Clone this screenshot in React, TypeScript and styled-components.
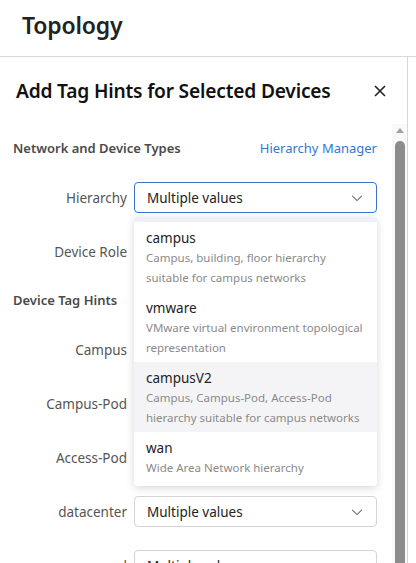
import React from "react";
import styled, { createGlobalStyle } from "styled-components";

const GlobalStyle = createGlobalStyle`
  html, body {
    margin: 0;
    padding: 0;
    background: #fff;
  }
  body {
    font-family: "Noto Sans", "Open Sans", sans-serif;
    color: #333;
    overflow: hidden;
  }
  * {
    box-sizing: border-box;
  }
`;

const Page = styled.div`
  width: 416px;
  height: 563px;
  display: flex;
  flex-direction: column;
  overflow: hidden;
`;

const TopBar = styled.header`
  height: 57px;
  flex: none;
  display: flex;
  align-items: center;
  padding: 0 0 6px 22px;
  border-bottom: 1px solid #d9d9d9;
  h1 {
    margin: 0;
    font-size: 23px;
    font-weight: 600;
    color: #222;
    letter-spacing: -0.2px;
  }
`;

const Drawer = styled.section`
  width: 408px;
  flex: 1;
  min-height: 0;
  display: flex;
  flex-direction: column;
  border-right: 1px solid #d6d6d6;
`;

const DrawerHeader = styled.div`
  height: 67px;
  flex: none;
  display: flex;
  align-items: center;
  justify-content: space-between;
  padding: 0 20px 0 16px;
  h2 {
    margin: 0;
    font-size: 19.2px;
    font-weight: 600;
    color: #111;
    letter-spacing: -0.2px;
  }
`;

const CloseButton = styled.button`
  border: 0;
  background: none;
  padding: 0;
  width: 14px;
  height: 14px;
  display: flex;
  color: #222;
  svg {
    width: 14px;
    height: 14px;
  }
`;

const DrawerBody = styled.div`
  flex: 1;
  min-height: 0;
  display: flex;
`;

const Form = styled.div`
  flex: 1;
  position: relative;
  padding: 14px 15px 0 13px;
  overflow: hidden;
`;

const Scrollbar = styled.div`
  width: 15px;
  flex: none;
  display: flex;
  flex-direction: column;
  align-items: center;
  background: #f9f9f9;
  padding-top: 2px;
`;

const ScrollArrow = styled.div`
  width: 0;
  height: 0;
  border-left: 4px solid transparent;
  border-right: 4px solid transparent;
  border-bottom: 5px solid #a3a3a3;
  margin: 2px 0 8px;
`;

const ScrollThumb = styled.div`
  width: 10px;
  flex: 1;
  background: #8c8c8c;
  border-radius: 5px 5px 0 0;
`;

const SectionHead = styled.div<{ $gap: number }>`
  height: 20px;
  display: flex;
  align-items: center;
  justify-content: space-between;
  margin-bottom: ${({ $gap }) => $gap}px;
  h3 {
    margin: 0;
    font-size: 13px;
    font-weight: 600;
    color: #4a4a4a;
  }
  a {
    font-size: 13px;
    color: #2f78d4;
    text-decoration: none;
  }
`;

const Row = styled.div`
  display: flex;
  align-items: center;
  gap: 7px;
  height: 31px;
  margin-bottom: 23px;
`;

const Label = styled.label`
  width: 114px;
  flex: none;
  text-align: right;
  font-size: 13.5px;
  color: #555;
  white-space: nowrap;
`;

const Select = styled.div<{ $focused?: boolean }>`
  flex: 1;
  height: 31px;
  display: flex;
  align-items: center;
  justify-content: space-between;
  padding: 0 12px 0 12px;
  border: 1px solid ${({ $focused }) => ($focused ? "#3b73c9" : "#d4d4d4")};
  border-radius: 4px;
  font-size: 13.5px;
  color: #222;
  background: #fff;
  svg {
    width: 14px;
    height: 14px;
    color: #6b6b6b;
  }
`;

const Menu = styled.ul`
  position: absolute;
  left: 134px;
  top: 93px;
  width: 243px;
  margin: 0;
  padding: 0 0 3px;
  list-style: none;
  background: #fff;
  border-top: 5px solid #edf0f6;
  border-radius: 4px;
  box-shadow: 0 2px 8px rgba(0, 0, 0, 0.16);
  z-index: 2;
`;

const Option = styled.li<{ $hover?: boolean }>`
  padding: 6px 12px 5px;
  background: ${({ $hover }) => ($hover ? "#f4f4f6" : "#fff")};
  strong {
    display: block;
    font-weight: 400;
    font-size: 13.5px;
    line-height: 20px;
    color: #222;
  }
  span {
    display: block;
    font-size: 11.5px;
    line-height: 19.5px;
    color: #8a8a8a;
  }
`;

const Chevron = () => (
  <svg viewBox="0 0 16 16" fill="none" stroke="currentColor" strokeWidth="1.2">
    <path d="M2.5 5.5 8 11l5.5-5.5" />
  </svg>
);

const hierarchies = [
  { name: "campus", desc: "Campus, building, floor hierarchy suitable for campus networks" },
  { name: "vmware", desc: "VMware virtual environment topological representation" },
  { name: "campusV2", desc: "Campus, Campus-Pod, Access-Pod hierarchy suitable for campus networks" },
  { name: "wan", desc: "Wide Area Network hierarchy" },
];

const tagRows = ["Campus", "Campus-Pod", "Access-Pod", "datacenter", "pool"];

export default function App() {
  return (
    <Page>
      <GlobalStyle />
      <TopBar>
        <h1>Topology</h1>
      </TopBar>
      <Drawer>
        <DrawerHeader>
          <h2>Add Tag Hints for Selected Devices</h2>
          <CloseButton aria-label="Close">
            <svg viewBox="0 0 14 14" fill="none" stroke="currentColor" strokeWidth="1.6">
              <path d="M2 2l10 10M12 2 2 12" />
            </svg>
          </CloseButton>
        </DrawerHeader>
        <DrawerBody>
          <Form>
            <SectionHead $gap={24}>
              <h3>Network and Device Types</h3>
              <a href="#">Hierarchy Manager</a>
            </SectionHead>
            <Row>
              <Label>Hierarchy</Label>
              <Select $focused>
                Multiple values
                <Chevron />
              </Select>
            </Row>
            <Row>
              <Label>Device Role</Label>
              <Select>
                Multiple values
                <Chevron />
              </Select>
            </Row>
            <SectionHead $gap={24}>
              <h3>Device Tag Hints</h3>
            </SectionHead>
            {tagRows.map((name) => (
              <Row key={name}>
                <Label>{name}</Label>
                <Select>
                  Multiple values
                  <Chevron />
                </Select>
              </Row>
            ))}
            <Menu>
              {hierarchies.map((h) => (
                <Option key={h.name} $hover={h.name === "campusV2"}>
                  <strong>{h.name}</strong>
                  <span>{h.desc}</span>
                </Option>
              ))}
            </Menu>
          </Form>
          <Scrollbar>
            <ScrollArrow />
            <ScrollThumb />
          </Scrollbar>
        </DrawerBody>
      </Drawer>
    </Page>
  );
}
